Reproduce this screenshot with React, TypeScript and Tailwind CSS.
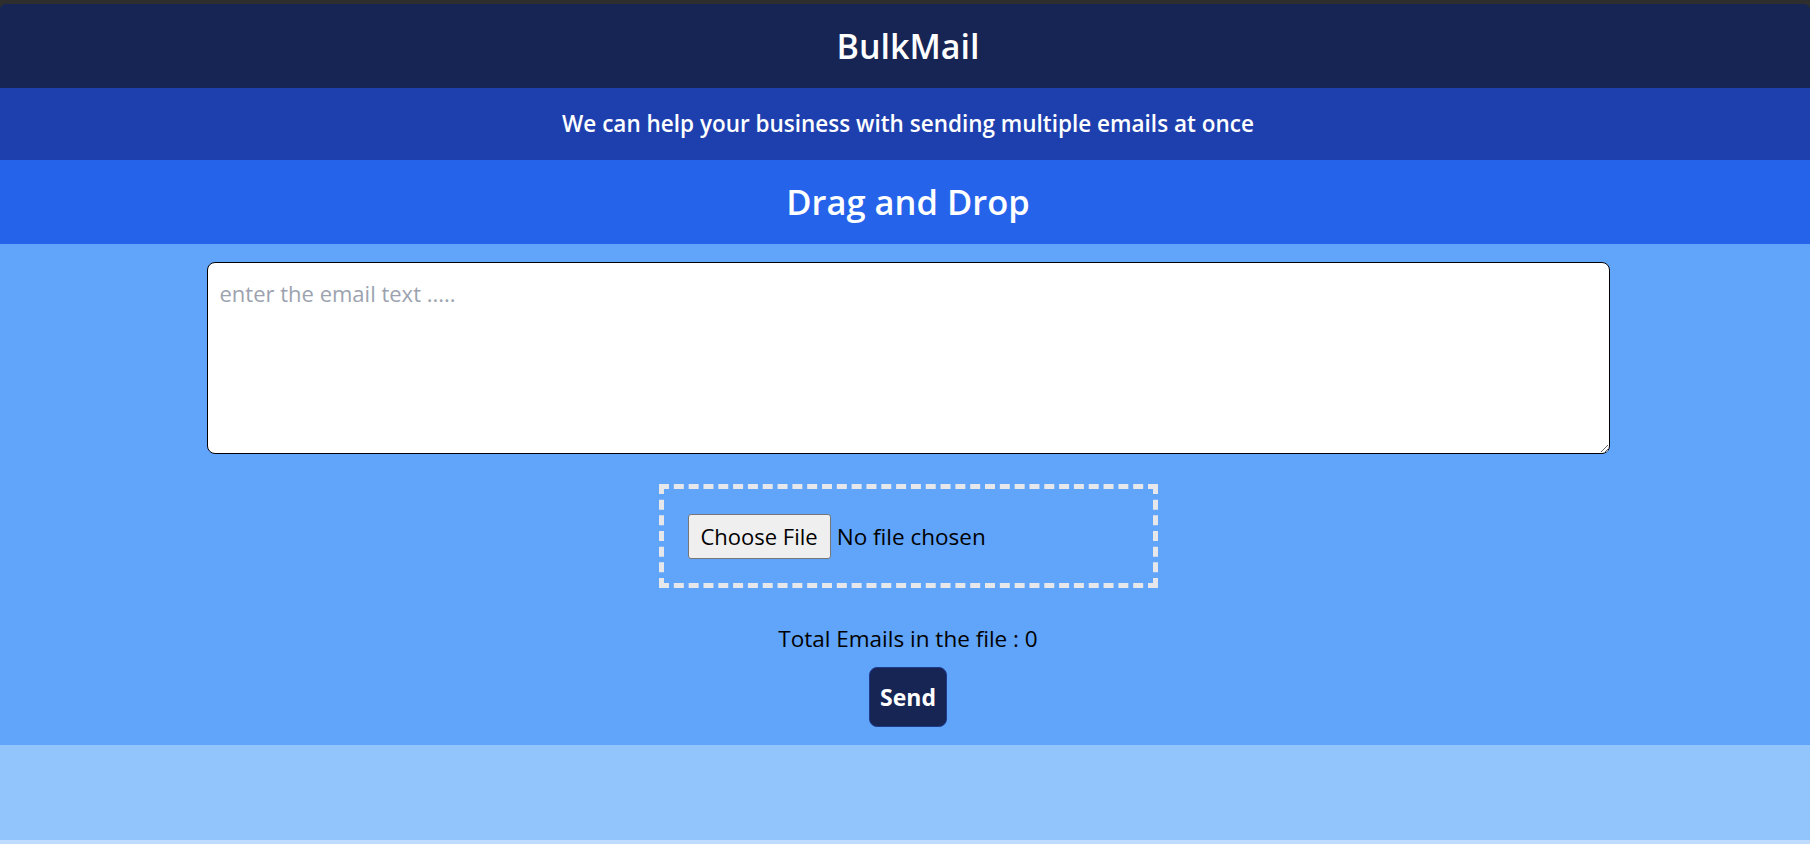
import { useState } from "react";

const App = () => {
  const [msg, setMsg] = useState("");
  const [emails, setEmails] = useState<string[]>([]);

  const handleFile = (e: React.ChangeEvent<HTMLInputElement>) => {
    const file = e.target.files?.[0];
    if (!file) return;
    const reader = new FileReader();
    reader.onload = (ev) => {
      const text = String(ev.target?.result ?? "");
      setEmails(text.split(/\r?\n/).filter((line) => line.trim() !== ""));
    };
    reader.readAsText(file);
  };

  return (
    <div className="min-h-screen bg-[#2e2e2e] pt-[4px] font-['Open_Sans',sans-serif]">
      <div className="rounded-t-[6px] overflow-hidden">
        {/* Title */}
        <div className="bg-[#172554] text-white text-center py-[22px] pl-[6px]">
          <h1 className="text-[34px] leading-[40px] font-semibold">BulkMail</h1>
        </div>

        {/* Tagline */}
        <div className="bg-[#1e40af] text-white text-center py-[20px] pl-[6px]">
          <h2 className="text-[22.5px] leading-[32px] font-semibold">
            We can help your business with sending multiple emails at once
          </h2>
        </div>

        {/* Drag and Drop */}
        <div className="bg-[#2563eb] text-white text-center py-[22px] pl-[6px]">
          <h2 className="text-[34.5px] leading-[40px] font-semibold">Drag and Drop</h2>
        </div>

        {/* Main */}
        <div className="bg-[#60a5fa] flex flex-col items-center pt-[18px] pb-[18px] pl-[6px]">
          <textarea
            value={msg}
            onChange={(e) => setMsg(e.target.value)}
            placeholder="enter the email text ....."
            className="w-[1403px] h-[192px] bg-white border border-black rounded-lg px-3 py-[15px] text-[22px] leading-[30px] text-black placeholder:text-[#9ca3af] outline-none"
          />

          <div className="mt-[30px] w-[499px] h-[104px] border-[5px] border-dashed border-[#e5e7eb] flex items-center px-[24px]">
            <input
              type="file"
              onChange={handleFile}
              className="text-[22.5px] text-black file:h-[45px] file:px-[12px] file:mr-[6px] file:bg-[#efefef] file:border file:border-solid file:border-[#767676] file:rounded-[3px] file:text-black file:text-[22px]"
            />
          </div>

          <p className="mt-[36px] text-[22.5px] leading-[30px] text-black">
            Total Emails in the file : {emails.length}
          </p>

          <button className="mt-[13px] h-[60px] px-[10px] bg-[#172554] text-white text-[23px] font-bold rounded-lg border border-[#1e3a8a]">
            Send
          </button>
        </div>

        {/* Footer */}
        <div className="bg-[#93c5fd] h-[95px]" />
        <div className="bg-[#bfdbfe] h-[4px]" />
      </div>
    </div>
  );
};

export default App;
